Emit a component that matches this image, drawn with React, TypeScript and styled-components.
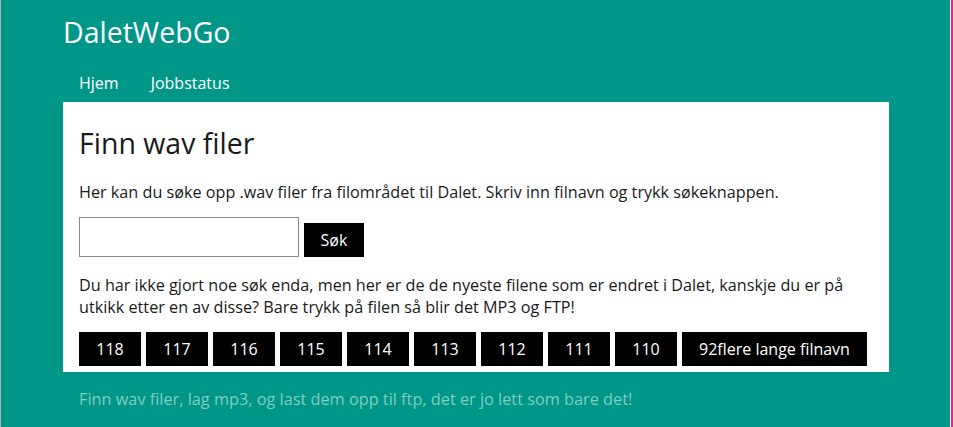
import styled, { createGlobalStyle } from "styled-components"

const GlobalStyle = createGlobalStyle`
   html, body {
      margin: 0;
      padding: 0;
      background-color: #009688;
   }
   body {
      font-family: "Open Sans", "Noto Sans", sans-serif;
   }
`

const files = ["118", "117", "116", "115", "114", "113", "112", "111", "110", "92flere lange filnavn"]

export default function App() {
   return (
      <>
         <GlobalStyle/>
         <Page>
            <Container>
               <Brand>DaletWebGo</Brand>
               <Nav>
                  <NavLink href="#">Hjem</NavLink>
                  <NavLink href="#">Jobbstatus</NavLink>
               </Nav>
               <Card>
                  <Heading>Finn wav filer</Heading>
                  <Text>Her kan du søke opp .wav filer fra filområdet til Dalet. Skriv inn filnavn og trykk søkeknappen.</Text>
                  <SearchRow>
                     <SearchInput type="text"/>
                     <SearchButton>Søk</SearchButton>
                  </SearchRow>
                  <Text>Du har ikke gjort noe søk enda, men her er de de nyeste filene som er endret i Dalet, kanskje du er på utkikk etter en av disse? Bare trykk på filen så blir det MP3 og FTP!</Text>
                  <FileList>
                     {files.map(f => <BlackButton key={f}>{f}</BlackButton>)}
                  </FileList>
               </Card>
               <Footer>Finn wav filer, lag mp3, og last dem opp til ftp, det er jo lett som bare det!</Footer>
            </Container>
         </Page>
      </>
   )
}

const Page = styled.div`
   min-height: 427px;
   box-sizing: border-box;
   border-left: 1px solid #a9b5b3;
   border-right: 2px solid #e0259c;
   box-shadow: inset -1px 0 0 #ffffff;
`

const Container = styled.div`
   width: 826px;
   margin: 0 auto;
`

const Brand = styled.div`
   color: #ffffff;
   font-size: 28.5px;
   line-height: 32px;
   padding: 16px 0 16px 0;
`

const Nav = styled.nav`
   display: flex;
   height: 38px;
   align-items: center;
`

const NavLink = styled.a`
   color: #ffffff;
   text-decoration: none;
   font-size: 16px;
   padding: 0 16px;
`

const Card = styled.main`
   background-color: #ffffff;
   color: #1a1a1a;
   padding: 21px 16px 7px 16px;
   height: 270px;
   box-sizing: border-box;
`

const Heading = styled.h1`
   margin: 0 0 18px 0;
   font-size: 28.5px;
   font-weight: 400;
   line-height: 40px;
`

const Text = styled.p`
   margin: 0 0 14px 0;
   font-size: 16.2px;
   line-height: 22px;
`

const SearchRow = styled.div`
   display: flex;
   align-items: flex-end;
   gap: 5px;
   margin-bottom: 17px;
`

const SearchInput = styled.input`
   width: 220px;
   height: 40px;
   box-sizing: border-box;
   border: 1px solid #8a8a8a;
   margin: 0;
`

const BlackButton = styled.button`
   background-color: #000000;
   color: #ffffff;
   border: none;
   font-family: "Open Sans", "Noto Sans", sans-serif;
   font-size: 16px;
   height: 34px;
   min-width: 62px;
   padding: 0 17px;
   cursor: pointer;
`

const SearchButton = styled(BlackButton)`
   min-width: 0;
   width: 60px;
   padding: 0;
`

const FileList = styled.div`
   display: flex;
   flex-wrap: wrap;
   gap: 5px;
`

const Footer = styled.footer`
   color: #7fcdc4;
   font-size: 16.3px;
   padding: 16px 16px;
`
